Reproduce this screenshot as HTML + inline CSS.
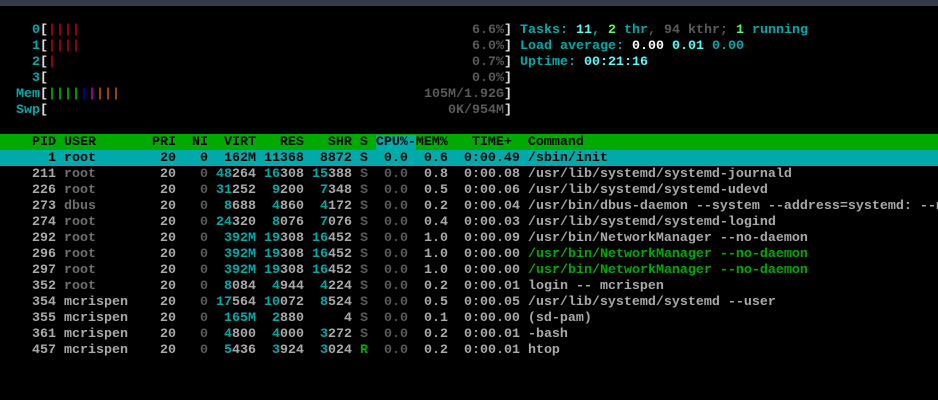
<!DOCTYPE html>
<html><head><meta charset="utf-8">
<style>
html,body{margin:0;padding:0;background:#000;width:938px;height:400px;overflow:hidden;position:relative}
.top{position:absolute;left:0;top:0;width:938px;height:6px;background:#363b48}
.r{position:absolute;left:0;height:16px;line-height:16px;white-space:pre;font-family:"Liberation Mono",monospace;font-weight:bold;font-size:13.333px;color:#aaaaaa;width:938px;overflow:hidden}
.r>.t{position:relative;top:1px}
.a{position:absolute;top:1px;white-space:pre}
.c{color:#00aaaa}.C{color:#55ffff}.n{color:#aaaaaa}.d{color:#5a5a5a}.u{color:#6e6e6e}.g{color:#00aa00}.G{color:#55ff55}.w{color:#ffffff}.W{color:#e0e0e0}
.R{color:#aa0000}.B{color:#0000aa}.M{color:#aa00aa}.Y{color:#aa5500}
.hdr{background:#00aa00;color:#000}
.sel{background:#00aaaa;color:#000}
.srt{background:#00aaaa}
</style></head><body>
<div class="top"></div>

<div class="r" style="top:22px"><span class="t">    <span class="c">0</span><span class="W">[</span><span class="R">||||</span></span><span class="a" style="left:472px"><span class="d">6.6%</span><span class="W">]</span></span><span class="a" style="left:520px"><span class="c">Tasks: </span><span class="C">11</span><span class="c">, </span><span class="G">2</span><span class="c"> thr</span><span class="d">, 94 kthr; </span><span class="G">1</span><span class="c"> running</span></span></div>

<div class="r" style="top:38px"><span class="t">    <span class="c">1</span><span class="W">[</span><span class="R">||||</span></span><span class="a" style="left:472px"><span class="d">6.0%</span><span class="W">]</span></span><span class="a" style="left:520px"><span class="c">Load average: </span><span class="w">0.00 </span><span class="C">0.01 </span><span class="c">0.00</span></span></div>

<div class="r" style="top:54px"><span class="t">    <span class="c">2</span><span class="W">[</span><span class="R">|</span></span><span class="a" style="left:472px"><span class="d">0.7%</span><span class="W">]</span></span><span class="a" style="left:520px"><span class="c">Uptime: </span><span class="C">00:21:16</span></span></div>

<div class="r" style="top:70px"><span class="t">    <span class="c">3</span><span class="W">[</span></span><span class="a" style="left:472px"><span class="d">0.0%</span><span class="W">]</span></span></div>

<div class="r" style="top:86px"><span class="t">  <span class="c">Mem</span><span class="W">[</span><span class="g">||||</span><span class="B">|</span><span class="M">|</span><span class="Y">|||</span></span><span class="a" style="left:424px"><span class="d">105M/1.92G</span><span class="W">]</span></span></div>

<div class="r" style="top:102px"><span class="t">  <span class="c">Swp</span><span class="W">[</span></span><span class="a" style="left:448px"><span class="d">0K/954M</span><span class="W">]</span></span></div>

<div class="r hdr" style="top:134px"><span class="t">    PID USER       PRI  NI  VIRT   RES   SHR S <span class="srt">CPU%-</span>MEM%   TIME+  Command</span></div>

<div class="r sel" style="top:150px"><span class="t">      1 root        20   0  162M 11368  8872 S  0.0  0.6  0:00.49 /sbin/init</span></div>

<div class="r" style="top:166px"><span class="t"><span class="n">    211 </span><span class="u">root      </span><span class="n">  20 </span><span class="d">  0</span> <span class="c">48</span>264 <span class="c">16</span>308 <span class="c">15</span>388 <span class="d">S  0.0</span>  0.8  0:00.08 /usr/lib/systemd/systemd-journald</span></div>

<div class="r" style="top:182px"><span class="t"><span class="n">    226 </span><span class="u">root      </span><span class="n">  20 </span><span class="d">  0</span> <span class="c">31</span>252  <span class="c">9</span>200  <span class="c">7</span>348 <span class="d">S  0.0</span>  0.5  0:00.06 /usr/lib/systemd/systemd-udevd</span></div>

<div class="r" style="top:198px"><span class="t"><span class="n">    273 </span><span class="u">dbus      </span><span class="n">  20 </span><span class="d">  0</span>  <span class="c">8</span>688  <span class="c">4</span>860  <span class="c">4</span>172 <span class="d">S  0.0</span>  0.2  0:00.04 /usr/bin/dbus-daemon --system --address=systemd: --nofork --nopidfile</span></div>

<div class="r" style="top:214px"><span class="t"><span class="n">    274 </span><span class="u">root      </span><span class="n">  20 </span><span class="d">  0</span> <span class="c">24</span>320  <span class="c">8</span>076  <span class="c">7</span>076 <span class="d">S  0.0</span>  0.4  0:00.03 /usr/lib/systemd/systemd-logind</span></div>

<div class="r" style="top:230px"><span class="t"><span class="n">    292 </span><span class="u">root      </span><span class="n">  20 </span><span class="d">  0</span>  <span class="c">392M</span> <span class="c">19</span>308 <span class="c">16</span>452 <span class="d">S  0.0</span>  1.0  0:00.09 /usr/bin/NetworkManager --no-daemon</span></div>

<div class="r" style="top:246px"><span class="t"><span class="n">    296 </span><span class="u">root      </span><span class="n">  20 </span><span class="d">  0</span>  <span class="c">392M</span> <span class="c">19</span>308 <span class="c">16</span>452 <span class="d">S  0.0</span>  1.0  0:00.00 <span class="g">/usr/bin/NetworkManager --no-daemon</span></span></div>

<div class="r" style="top:262px"><span class="t"><span class="n">    297 </span><span class="u">root      </span><span class="n">  20 </span><span class="d">  0</span>  <span class="c">392M</span> <span class="c">19</span>308 <span class="c">16</span>452 <span class="d">S  0.0</span>  1.0  0:00.00 <span class="g">/usr/bin/NetworkManager --no-daemon</span></span></div>

<div class="r" style="top:278px"><span class="t"><span class="n">    352 </span><span class="u">root      </span><span class="n">  20 </span><span class="d">  0</span>  <span class="c">8</span>084  <span class="c">4</span>944  <span class="c">4</span>224 <span class="d">S  0.0</span>  0.2  0:00.01 login -- mcrispen</span></div>

<div class="r" style="top:294px"><span class="t">    354 mcrispen    20 <span class="d">  0</span> <span class="c">17</span>564 <span class="c">10</span>072  <span class="c">8</span>524 <span class="d">S  0.0</span>  0.5  0:00.05 /usr/lib/systemd/systemd --user</span></div>

<div class="r" style="top:310px"><span class="t">    355 mcrispen    20 <span class="d">  0</span>  <span class="c">165M</span>  <span class="c">2</span>880     4 <span class="d">S  0.0</span>  0.1  0:00.00 (sd-pam)</span></div>

<div class="r" style="top:326px"><span class="t">    361 mcrispen    20 <span class="d">  0</span>  <span class="c">4</span>800  <span class="c">4</span>000  <span class="c">3</span>272 <span class="d">S  0.0</span>  0.2  0:00.01 -bash</span></div>

<div class="r" style="top:342px"><span class="t">    457 mcrispen    20 <span class="d">  0</span>  <span class="c">5</span>436  <span class="c">3</span>924  <span class="c">3</span>024 <span class="g">R</span> <span class="d"> 0.0</span>  0.2  0:00.01 htop</span></div>

</body></html>
